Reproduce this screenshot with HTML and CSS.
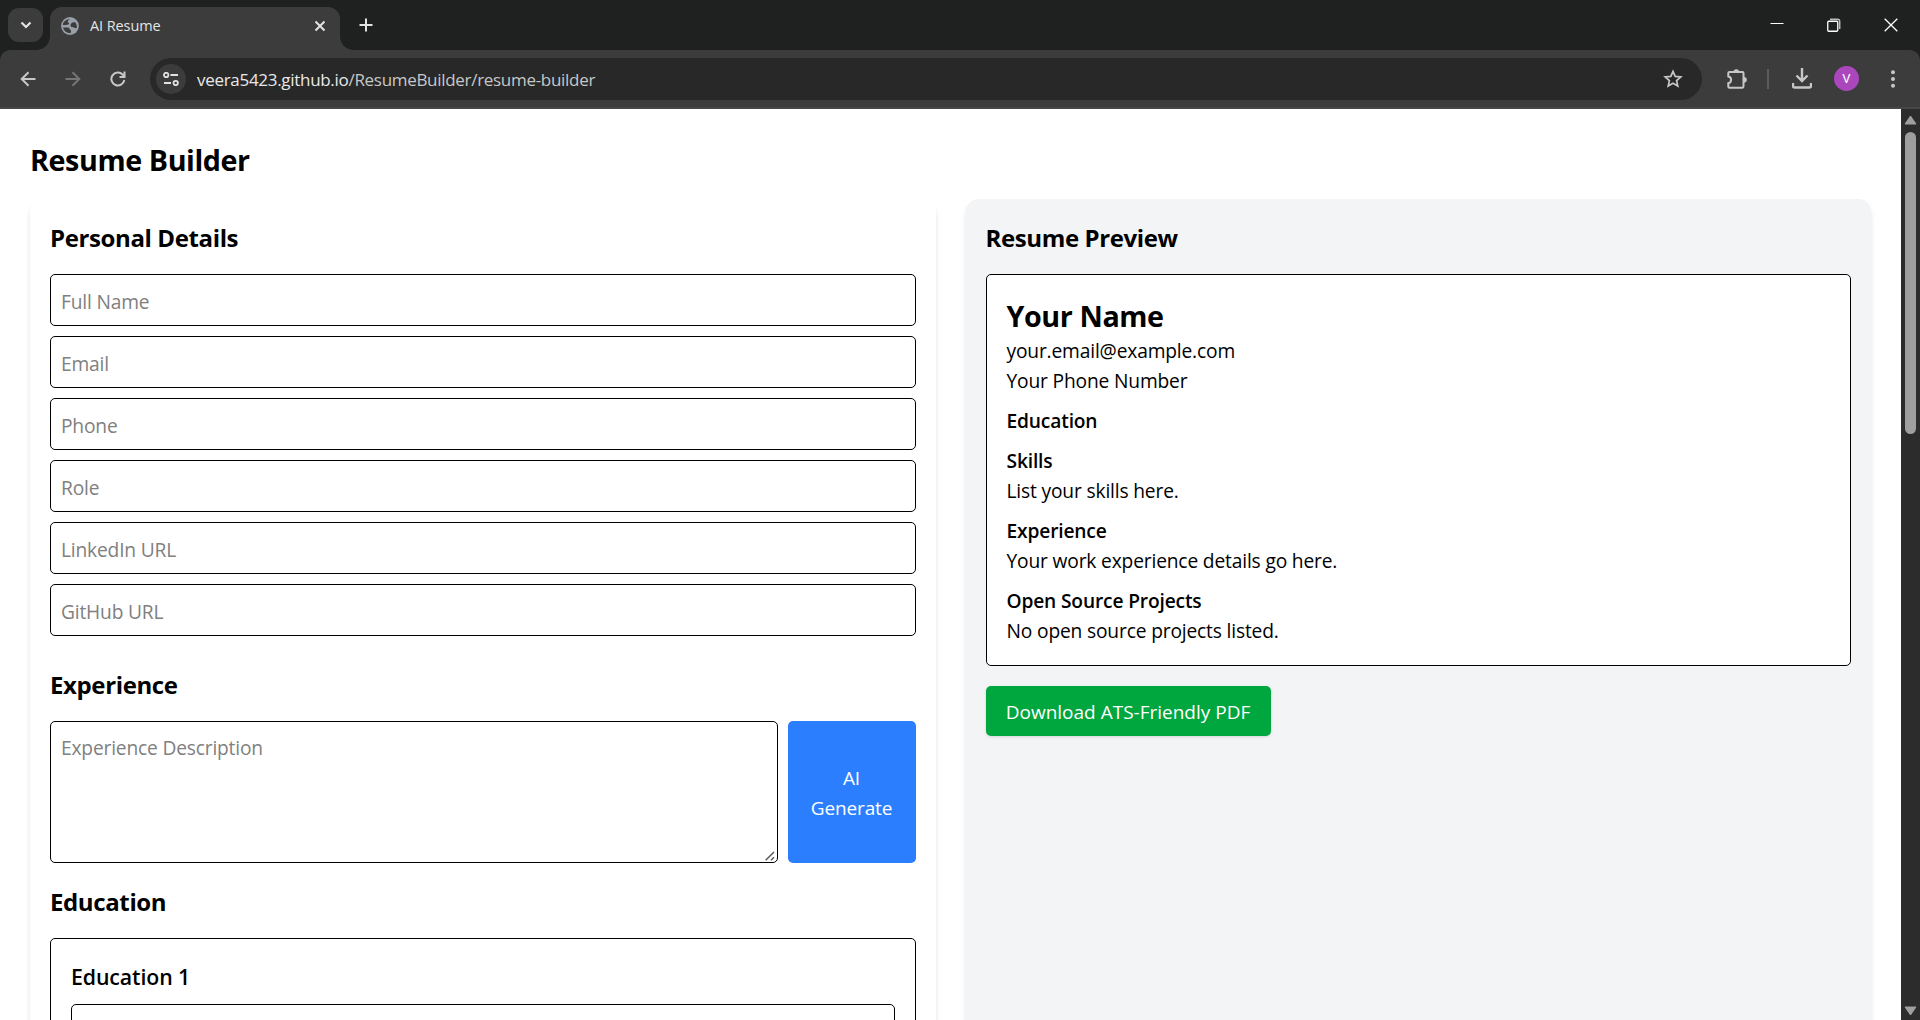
FILE: index.html
```html
<!DOCTYPE html>
<html lang="en">
<head>
<meta charset="utf-8">
<title>AI Resume</title>
<link rel="stylesheet" href="styles.css">
</head>
<body>
<div class="window">
  <header class="tabstrip">
    <div class="tab-search"><svg width="12" height="8" viewBox="0 0 12 8"><path d="M1.500 1.500 6 6l4.500-4.500" fill="none" stroke="#e3e3e3" stroke-width="2.200"/></svg></div>
    <div class="tab">
      <svg class="globe" width="18" height="18" viewBox="0 0 18 18"><circle cx="9" cy="9" r="8.900" fill="#9aa0a9"/><path d="M9.500 2c-1.500.3-3 1.500-2.700 3 .2.800 1.200.7 1.300 1.600.1 1.100-1.600 1.100-3 1.300L1.800 8C2 5 5 1.800 9.500 2zM2 10.500h4.500c1.800.1 2.200 1.200 2.200 2 1.100.2 1.500 1 1.300 2l-.3 1.700C6 16.300 2.800 14 2 10.500zM10.500 6.300c.6-.8 2.600-1.300 3.900-.9 1.100 1.500 1.700 3.300 1.500 4.800-.6 1.400-1.500 1.100-2.300.5-.9-.7-2.300-.1-3.500-1-.9-.8-.7-2.500.4-3.400z" fill="#3c3c3c"/></svg>
      <span class="tab-title">AI Resume</span>
      <svg class="tab-close" width="12" height="12" viewBox="0 0 12 12"><path d="M1.500 1.500l9 9m0-9l-9 9" stroke="#e3e3e3" stroke-width="2"/></svg>
      <i class="flare flare-left"></i><i class="flare flare-right"></i>
    </div>
    <svg class="new-tab" width="14" height="14" viewBox="0 0 14 14"><path d="M7 .5v13M.5 7h13" stroke="#e3e3e3" stroke-width="2"/></svg>
    <div class="controls">
      <svg width="14" height="14" viewBox="0 0 14 14"><path d="M.5 5.500h13" stroke="#fff"/></svg>
      <svg width="14" height="14" viewBox="0 0 14 14" fill="none"><path d="M3 1.200h7.500q2.200 0 2.200 2.200v7.600" stroke="#bbb" stroke-width="1.500"/><rect x=".75" y="3.250" width="10" height="10" rx="1" stroke="#fff" stroke-width="1.300"/></svg>
      <svg width="14" height="14" viewBox="0 0 14 14"><path d="M.7.700l12.600 12.600m0-12.600L.7 13.300" stroke="#fff" stroke-width="1.300"/></svg>
    </div>
  </header>
  <div class="toolbar">
    <svg class="nav" width="16" height="16" viewBox="0 0 16 16"><path d="M15.500 8H2M8.500 1.200L1.700 8l6.800 6.800" fill="none" stroke="#c7c7c7" stroke-width="2"/></svg>
    <svg class="nav" width="16" height="16" viewBox="0 0 16 16"><path d="M.5 8H14M7.500 1.200L14.300 8l-6.800 6.800" fill="none" stroke="#757575" stroke-width="2"/></svg>
    <svg class="nav" width="16" height="16" viewBox="0 0 16 16"><path d="M14.300 9A6.500 6.500 0 1 1 12.600 3.500L14.500 5.400M14.500 .5V6H9.500" fill="none" stroke="#c7c7c7" stroke-width="2"/></svg>
    <div class="omnibox">
      <div class="site-info"><svg width="16" height="14" viewBox="0 0 16 14" fill="none" stroke="#e3e3e3" stroke-width="1.800"><circle cx="3.200" cy="3" r="2.200"/><path d="M7.500 3H15M1 11h7"/><circle cx="12.700" cy="11" r="2.200"/></svg></div>
      <div class="url">veera5423.github.io<span class="path">/ResumeBuilder/resume-builder</span></div>
      <svg class="star" width="20" height="19" viewBox="0 0 20 19"><path d="M10 2.300l2.200 5.100 5.600.5-4.200 3.700 1.200 5.400L10 14.200 5.200 17l1.200-5.400L2.200 7.900l5.600-.5z" fill="none" stroke="#c7c7c7" stroke-width="1.700"/></svg>
    </div>
    <svg class="puzzle" width="22" height="22" viewBox="0 0 22 22"><path d="M3.500 4H16.500Q17.500 4 17.500 5V18Q17.500 19.700 16.500 19.700H3.500Q2.300 19.700 2.300 18.500V15.200C6 14.500 6 9 2.300 8.500V5Q2.300 4 3.500 4z" fill="none" stroke="#c7c7c7" stroke-width="2"/><path d="M7.500 4a2.800 2.800 0 0 1 5.600 0zM18 9a2.800 2.800 0 0 1 0 5.600z" fill="#c7c7c7"/></svg>
    <i class="divider"></i>
    <svg class="download" width="20" height="21" viewBox="0 0 20 21"><path d="M10 0v12M4.500 7.500L10 13l5.500-5.500M1 15v3q0 1.500 1.500 1.500h15q1.500 0 1.500-1.500v-3" fill="none" stroke="#c7c7c7" stroke-width="2.400"/></svg>
    <div class="avatar">V</div>
    <svg class="kebab" width="4" height="18" viewBox="0 0 4 18" fill="#c7c7c7"><circle cx="2" cy="2.200" r="2"/><circle cx="2" cy="9" r="2"/><circle cx="2" cy="15.800" r="2"/></svg>
  </div>
  <div class="viewport">
    <main class="page">
      <h1>Resume Builder</h1>
      <div class="columns">
        <section class="card">
          <h2>Personal Details</h2>
          <div class="fields">
            <input class="field" placeholder="Full Name">
            <input class="field" placeholder="Email">
            <input class="field" placeholder="Phone">
            <input class="field" placeholder="Role">
            <input class="field" placeholder="LinkedIn URL">
            <input class="field" placeholder="GitHub URL">
          </div>
          <h2>Experience</h2>
          <div class="experience">
            <div class="area-wrap">
              <textarea class="field area" placeholder="Experience Description"></textarea>
              <svg class="grip" width="10" height="10" viewBox="0 0 10 10"><path d="M.7 9.300L9 1M6 9.300L9 6.300" stroke="#555" stroke-width="1.400"/></svg>
            </div>
            <button class="generate">AI Generate</button>
          </div>
          <h2>Education</h2>
          <div class="entry">
            <h3>Education 1</h3>
            <input class="field">
          </div>
        </section>
        <section class="card preview">
          <h2>Resume Preview</h2>
          <div class="sheet">
            <div class="name">Your Name</div>
            <p>your.email@example.com</p>
            <p>Your Phone Number</p>
            <h4>Education</h4>
            <h4>Skills</h4>
            <p>List your skills here.</p>
            <h4>Experience</h4>
            <p>Your work experience details go here.</p>
            <h4>Open Source Projects</h4>
            <p>No open source projects listed.</p>
          </div>
          <button class="pdf">Download ATS-Friendly PDF</button>
        </section>
      </div>
    </main>
    <aside class="scrollbar">
      <svg width="13" height="10" viewBox="0 0 13 10"><path d="M6.500 1L12 9H1z" fill="#9f9f9f" stroke="#9f9f9f" stroke-linejoin="round"/></svg>
      <i class="thumb"></i>
      <svg class="down" width="13" height="10" viewBox="0 0 13 10"><path d="M6.500 9L12 1H1z" fill="#9f9f9f" stroke="#9f9f9f" stroke-linejoin="round"/></svg>
    </aside>
  </div>
</div>
</body>
</html>
```
FILE: styles.css
```css
* { box-sizing: border-box; margin: 0; padding: 0; }
body { font-family: "Open Sans", "Noto Sans", sans-serif; color: #000; background: #fff; overflow: hidden; }
svg { display: block; flex: none; }
.window { display: flex; flex-direction: column; height: 1020px; background: #1f2120; }

/* tab strip */
.tabstrip { display: flex; height: 50px; flex: none; padding-left: 8px; }
.tab-search { width: 35px; height: 34px; margin: 8px 7px 0 0; border-radius: 11px; background: #3c3c3c; display: flex; align-items: center; justify-content: center; }
.tab { position: relative; width: 290px; height: 43px; margin-top: 7px; padding: 0 14px 6px 11px; border-radius: 12px 12px 0 0; background: #3c3c3c; display: flex; align-items: center; }
.tab-title { margin-left: 11px; font-size: 14.500px; line-height: 20px; padding-top: 1px; letter-spacing: -.1px; color: #e3e3e3; flex: 1; }
.flare { position: absolute; bottom: 0; width: 13px; height: 13px; }
.flare-left { left: -13px; background: radial-gradient(circle at 0 0, transparent 12.500px, #3c3c3c 13px); }
.flare-right { right: -13px; background: radial-gradient(circle at 100% 0, transparent 12.500px, #3c3c3c 13px); }
.new-tab { margin: 18px 0 0 19px; }
.controls { display: flex; gap: 43px; margin: 18px 22px 0 auto; }

/* toolbar */
.toolbar { display: flex; align-items: center; height: 59px; flex: none; padding: 0 25px 0 20px; background: #3c3c3c; border-bottom: 2px solid #474747; border-radius: 10px 10px 0 0; }
.nav { margin-right: 29px; }
.omnibox { display: flex; align-items: center; width: 1552px; height: 42px; margin-left: -5px; padding: 0 19px 0 6px; border-radius: 21px; background: #282828; }
.site-info { display: flex; align-items: center; justify-content: center; width: 30px; height: 30px; border-radius: 50%; background: #3c3c3c; }
.url { flex: 1; margin-left: 11px; font-size: 17px; line-height: 24px; padding-top: 2px; letter-spacing: -.3px; color: #e8e8e8; }
.path { color: #c7c7c7; }
.puzzle { margin-left: 24px; }
.divider { width: 2px; height: 20px; margin-left: 19px; background: #5c5c5c; }
.download { margin-left: 23px; }
.avatar { width: 25px; height: 25px; margin-left: 22px; border-radius: 50%; background: #ab47bc; color: #fff; font: 13px/25px Roboto, sans-serif; text-align: center; }
.kebab { margin-left: auto; }

/* page */
.viewport { display: flex; flex: 1; min-height: 0; }
.page { flex: 1; padding: 30px 30px 0; background: #fff; overflow: hidden; }
h1, .name { font-size: 28.700px; line-height: 38px; padding-top: 2px; font-weight: 700; letter-spacing: -.4px; }
h1 { margin-bottom: 20px; }
h2 { font-size: 24px; line-height: 32px; padding-top: 3px; margin-bottom: 20px; font-weight: 700; letter-spacing: -.38px; }
h3 { font-size: 21.300px; line-height: 34px; padding-top: 1px; margin-bottom: 10px; font-weight: 600; letter-spacing: -.1px; }
h4, p { font-size: 19.200px; line-height: 28px; padding-top: 2px; letter-spacing: -.16px; }
h4 { font-weight: 600; margin-top: 10px; }
.columns { display: grid; grid-template-columns: 1fr 1fr; gap: 30px; height: 1200px; }
.card { padding: 20px; border-radius: 12.500px; background: #fff; box-shadow: 0 5px 7.500px -1px rgba(0,0,0,.1), 0 2.500px 5px -2.500px rgba(0,0,0,.1); }
.preview { background: #f3f4f6; }
.fields { display: grid; gap: 10px; margin-bottom: 30px; }
.field { display: block; width: 100%; height: 52px; padding: 12px 10px 10px; border: 1px solid #000; border-radius: 5px; background: #fff; font: 19.200px/28px "Open Sans", "Noto Sans", sans-serif; letter-spacing: -.18px; outline: 0; }
.field::placeholder { color: #808080; }
.experience { display: grid; grid-template-columns: 1fr 128px; gap: 10px; margin-bottom: 20px; }
.area-wrap { position: relative; }
.area { height: 142px; line-height: 30px; padding-top: 11px; resize: none; }
.grip { position: absolute; right: 3px; bottom: 2px; }
button { border: 0; border-radius: 5px; color: #fff; font: 19px/30px "Open Sans", "Noto Sans", sans-serif; letter-spacing: -.04px; }
.generate { padding: 11px 20px 10px; background: #2b7fff; letter-spacing: -.15px; }
.entry { padding: 20px; border: 1px solid #000; border-radius: 5px; }
.sheet { padding: 20px; border: 1px solid #000; border-radius: 5px; background: #fff; }
.pdf { width: 285px; height: 50px; margin-top: 20px; padding-top: 2px; background: #00a63e; box-shadow: 0 1px 3px rgba(0,0,0,.12); white-space: nowrap; letter-spacing: 0; }

/* scrollbar */
.scrollbar { display: flex; flex-direction: column; align-items: center; width: 19px; padding: 6px 0 4px; background: #2c2c2c; }
.thumb { width: 11px; height: 302px; margin-top: 7px; border-radius: 6px; background: #9f9f9f; }
.down { margin-top: auto; }
```
